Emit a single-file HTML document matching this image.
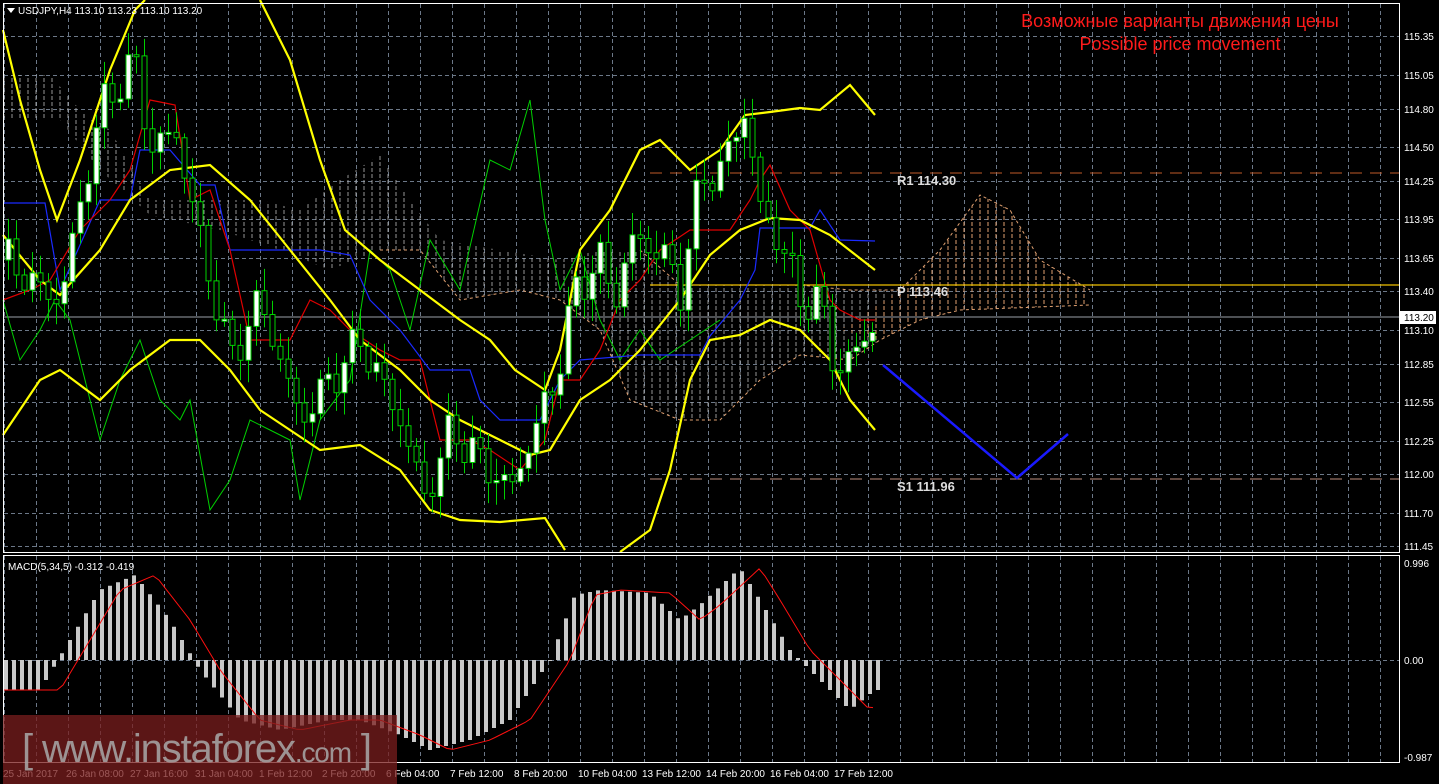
<!DOCTYPE html>
<html><head><meta charset="utf-8"><style>
html,body{margin:0;padding:0;background:#000;width:1439px;height:784px;overflow:hidden}
svg{display:block}
text{font-family:"Liberation Sans",sans-serif}
</style></head><body>
<svg id="s" width="1439" height="784" viewBox="0 0 1439 784" xmlns="http://www.w3.org/2000/svg">
<defs>
<pattern id="hatch" width="8" height="6" patternUnits="userSpaceOnUse"><line x1="4" y1="0" x2="4" y2="4" stroke="#bbb" stroke-width="1"/></pattern>
<pattern id="hatch2" width="8" height="6" patternUnits="userSpaceOnUse"><line x1="4" y1="0" x2="4" y2="4" stroke="#e0a070" stroke-width="1"/></pattern>
</defs>
<g id="grid" stroke="#6c7888" stroke-dasharray="4,3" stroke-width="1"></g>
<path d="M3,75 L50,75 80,110 110,130 150,200 200,200 260,200 300,210 340,180 380,155 410,200 440,240 500,250 560,260 600,250 640,250 680,285 720,285 760,285 800,285 850,290 900,290 940,250 980,195 1010,210 1040,260 1090,290 L1090,305 960,310 920,320 880,340 850,360 800,355 760,380 720,420 680,420 630,400 600,330 560,300 520,290 460,300 420,250 380,250 330,270 280,250 220,230 150,215 100,170 60,120 3,120 Z" fill="url(#hatch)" opacity="0.8"/>
<path d="M840,330 L900,290 940,250 980,195 1010,210 1040,260 1090,290 1090,305 960,310 920,320 880,340 Z" fill="url(#hatch2)"/>
<polyline fill="none" stroke="#e0a070" stroke-dasharray="3,3" points="640,250 680,285 720,285 760,285 800,285 850,290 900,290 940,250 980,195 1010,210 1040,260 1090,290"/>
<polyline fill="none" stroke="#e0a070" stroke-dasharray="3,3" points="380,250 420,250 460,300 520,290 560,300 600,330 630,400 680,420 720,420 760,380 800,355 850,360 880,340 920,320 960,310 1090,305"/>
<line x1="650" y1="173" x2="1399" y2="173" stroke="#c05a28" stroke-dasharray="12,8"/>
<line x1="650" y1="479" x2="1399" y2="479" stroke="#c09080" stroke-dasharray="12,8"/>
<line x1="650" y1="285" x2="1399" y2="285" stroke="#f0c000" stroke-width="1.2"/>
<line x1="3" y1="317" x2="1399" y2="317" stroke="#9aa0a8" stroke-width="1"/>
<text x="897" y="185" fill="#ddd" font-size="13" font-family="Liberation Mono,monospace" font-weight="bold">R1 114.30</text>
<text x="897" y="296" fill="#ddd" font-size="13" font-family="Liberation Mono,monospace" font-weight="bold">P 113.46</text>
<text x="897" y="491" fill="#ddd" font-size="13" font-family="Liberation Mono,monospace" font-weight="bold">S1 111.96</text>
<polyline fill="none" stroke="#00d000" stroke-width="1" points="3,300 20,360 40,330 55,300 70,320 80,360 100,440 120,380 140,340 160,400 180,420 190,400 210,510 230,480 250,420 270,430 290,440 300,500 320,420 350,380 370,250 390,270 410,330 430,240 460,290 490,160 510,170 530,100 545,220 560,290 580,250 600,320 620,360 640,330 660,360 690,340 720,320"/>
<polyline fill="none" stroke="#1a2aff" stroke-width="1.2" points="3,203 45,203 60,290 100,200 130,200 140,150 170,150 200,185 215,185 230,250 300,250 320,250 350,255 370,300 400,330 430,370 470,370 480,400 500,420 540,420 550,400 560,380 580,360 640,355 700,355 710,336 740,300 755,270 760,228 810,228 820,210 840,240 875,241"/>
<polyline fill="none" stroke="#e00000" stroke-width="1.2" points="3,300 30,290 50,280 80,230 110,200 130,170 150,100 175,105 190,200 210,190 230,250 250,340 290,340 310,300 330,310 350,330 380,350 400,360 420,360 440,440 470,440 490,450 520,470 545,440 560,380 580,380 600,350 620,300 640,280 660,250 690,230 730,230 750,200 760,180 770,165 790,210 810,230 830,300 840,310 860,320 875,320"/>
<g fill="none" stroke="#ffff00" stroke-width="2.2">
<polyline points="3,30 20,100 40,170 57,220 80,160 110,70 135,10 145,0"/>
<polyline points="260,0 290,60 320,160 345,230 380,260 420,290 460,320 490,340 515,370 545,390 560,350 580,250 610,210 640,150 660,140 690,170 720,150 745,115 770,112 800,108 820,110 850,85 875,115"/>
<polyline points="3,235 40,280 60,295 100,250 130,200 170,170 210,165 250,200 290,250 330,300 360,340 400,370 430,400 460,420 500,440 530,455 550,450 580,400 610,380 640,350 680,300 710,255 740,230 770,218 800,220 830,235 875,270"/>
<polyline points="3,435 40,380 60,370 100,400 130,370 170,340 200,340 230,370 260,410 290,430 320,450 360,445 400,470 430,510 460,520 500,522 545,518 565,550"/>
<polyline points="620,552 650,530 670,470 690,380 710,340 740,335 770,320 800,330 830,360 850,400 875,430"/>
</g>
<path id="wicks" fill="none" stroke="#00d000" stroke-width="1"/>
<path id="wbody" fill="#fff" stroke="#00d000" stroke-width="1"/>
<path id="bbody" fill="#000" stroke="#00d000" stroke-width="1"/>
<polyline fill="none" stroke="#1a1aff" stroke-width="2.5" points="883,365 1017,478 1068,434"/>
<path id="macd" fill="#c8c8c8"/>
<polyline id="sig" fill="none" stroke="#ff1010" stroke-width="1"/>
<rect x="3.5" y="3.5" width="1396" height="549" fill="none" stroke="#fff"/>
<rect x="3.5" y="555.5" width="1396" height="207" fill="none" stroke="#fff"/>
<rect x="1400" y="311" width="36" height="13" fill="#fff"/>
<text x="1404" y="321" fill="#000" font-size="10">113.20</text>
<g id="ylab" fill="#fff" font-size="10"></g>
<text x="1404" y="567" fill="#fff" font-size="10">0.996</text>
<text x="1404" y="664" fill="#fff" font-size="10">0.00</text>
<text x="1404" y="761" fill="#fff" font-size="10">-0.987</text>
<text x="8" y="570" fill="#fff" font-size="10">MACD(5,34,5) -0.312 -0.419</text>
<path d="M7,8 L15,8 11,13 Z" fill="#fff"/>
<text x="18" y="14" fill="#fff" font-size="10">USDJPY,H4  113.10 113.23 113.10 113.20</text>
<text x="1180" y="27" fill="#ff1a1a" font-size="18" text-anchor="middle">Возможные варианты движения цены</text>
<text x="1180" y="50" fill="#ff1a1a" font-size="18" text-anchor="middle">Possible price movement</text>
<g id="xlab" fill="#fff" font-size="10"></g>
<rect x="3" y="715" width="394" height="69" fill="#7a1e1e" opacity="0.75"/>
<text x="22" y="762" fill="#a9a9a9" font-size="40" opacity="0.85" textLength="350">[ www.instaforex<tspan font-size="28">.com</tspan> ]</text>
</svg>
<script>
(function(){
var NS="http://www.w3.org/2000/svg";
function el(p,t,a){var e=document.createElementNS(NS,t);for(var k in a)e.setAttribute(k,a[k]);document.getElementById(p).appendChild(e);return e;}
var g="grid";
for(var gx=4;gx<1399;gx+=32){el(g,"line",{x1:gx+0.5,y1:4,x2:gx+0.5,y2:552});el(g,"line",{x1:gx+0.5,y1:556,x2:gx+0.5,y2:762});}
var ys=[36,75,109,147,181,219,258,291,330,364,402,441,474,513,546],lb=["115.35","115.05","114.80","114.50","114.25","113.95","113.65","113.40","113.10","112.85","112.55","112.25","112.00","111.70","111.45"];
for(var i=0;i<ys.length;i++){el(g,"line",{x1:4,y1:ys[i]+0.5,x2:1399,y2:ys[i]+0.5});var t=el("ylab","text",{x:1404,y:ys[i]+4});t.textContent=lb[i];}
el(g,"line",{x1:4,y1:660.5,x2:1399,y2:660.5});
var dl=[["25 Jan 2017",3],["26 Jan 08:00",66],["27 Jan 16:00",130],["31 Jan 04:00",195],["1 Feb 12:00",259],["2 Feb 20:00",322],["6 Feb 04:00",386],["7 Feb 12:00",450],["8 Feb 20:00",514],["10 Feb 04:00",578],["13 Feb 12:00",642],["14 Feb 20:00",706],["16 Feb 04:00",770],["17 Feb 12:00",834]];
for(var i=0;i<dl.length;i++){var t=el("xlab","text",{x:dl[i][1],y:777});t.textContent=dl[i][0];}
function interp(pts,x){for(var j=0;j<pts.length-1;j++){if(x>=pts[j][0]&&x<=pts[j+1][0]){var f=(x-pts[j][0])/(pts[j+1][0]-pts[j][0]);return pts[j][1]+f*(pts[j+1][1]-pts[j][1]);}}return pts[pts.length-1][1];}
var P=[[8,260],[40,290],[60,300],[100,110],[135,60],[150,150],[175,130],[200,240],[230,360],[260,300],[300,420],[330,380],[360,340],[400,420],[425,500],[450,430],[480,460],[510,490],[530,440],[555,380],[575,290],[600,260],[615,300],[630,240],[660,250],[680,290],[700,180],[720,170],[745,110],[760,210],[780,240],[800,300],[820,300],[835,370],[850,360],[875,320]];
var W="",B1="",B2="";
var prev=260;
for(var cx=8;cx<=876;cx+=8){
 var n=Math.sin(cx*1.37)*14+Math.sin(cx*0.53)*8;
 var c=interp(P,cx)+n; var o=prev;
 var tp=Math.min(o,c), bt=Math.max(o,c);
 if(bt-tp<2){bt=tp+2;}
 var wt=tp-4-Math.abs(Math.sin(cx*2.1))*18, wb=bt+4+Math.abs(Math.cos(cx*1.9))*18;
 W+="M"+(cx+0.5)+" "+wt.toFixed(1)+"V"+wb.toFixed(1);
 var r="M"+(cx-2)+" "+tp.toFixed(1)+"h5V"+bt.toFixed(1)+"h-5Z";
 if(c<o)B1+=r; else B2+=r;
 prev=c;
}
document.getElementById("wicks").setAttribute("d",W);
document.getElementById("wbody").setAttribute("d",B1);
document.getElementById("bbody").setAttribute("d",B2);
var M=[[8,690],[40,690],[70,640],[100,590],[135,575],[170,620],[200,670],[240,720],[280,730],[330,720],[360,720],[400,735],[430,750],[470,740],[510,720],[550,660],[575,595],[600,590],[650,593],[680,620],[700,605],[740,568],[760,600],[790,650],[820,680],[850,710],[875,690]];
var D="";
for(var mx=6;mx<=878;mx+=8){var v=interp(M,mx);var y0=Math.min(v,660),h=Math.max(Math.abs(v-660),1);D+="M"+(mx-2)+" "+y0.toFixed(1)+"h4v"+h.toFixed(1)+"h-4Z";}
document.getElementById("macd").setAttribute("d",D);
var sp=[];for(var sx=3;sx<=876;sx+=6){sp.push(sx+","+interp(M,sx-20).toFixed(1));}
document.getElementById("sig").setAttribute("points",sp.join(" "));
})();
</script>
</body></html>
